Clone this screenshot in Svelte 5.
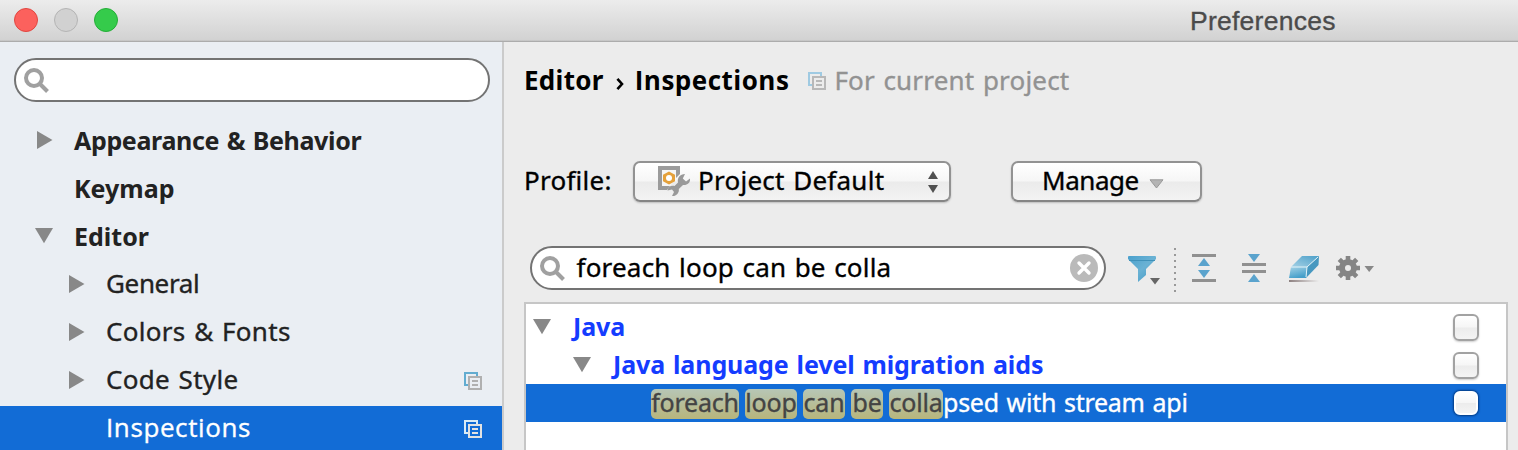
<script>
  const tree = [
    { label: 'Appearance & Behavior', level: 0, arrow: 'right', spacing: -0.35 },
    { label: 'Keymap', level: 0, arrow: '', spacing: 0 },
    { label: 'Editor', level: 0, arrow: 'down', spacing: 0 },
    { label: 'General', level: 1, arrow: 'right', spacing: -0.35 },
    { label: 'Colors & Fonts', level: 1, arrow: 'right', spacing: 0.3 },
    { label: 'Code Style', level: 1, arrow: 'right', spacing: 0.3, project: true },
    { label: 'Inspections', level: 1, arrow: '', spacing: 0.6, project: true, selected: true }
  ];
  const words = [
    { text: 'foreach', width: 88 },
    { text: 'loop', width: 52 },
    { text: 'can', width: 42 },
    { text: 'be', width: 32 },
    { text: 'colla', width: 54 }
  ];
  const query = 'foreach loop can be colla';
</script>

{#snippet disclosure(kind)}
  {#if kind === 'right'}
    <svg class="tri" width="18" height="18" viewBox="0 0 18 18"><path d="M2 0L17.5 9L2 18Z" fill="#888" /></svg>
  {:else if kind === 'down'}
    <svg class="tri" width="18" height="18" viewBox="0 0 18 18"><path d="M0 1H18L9 16.3Z" fill="#888" /></svg>
  {:else}
    <span class="tri"></span>
  {/if}
{/snippet}

{#snippet copyIcon(back, front)}
  <svg width="18" height="18" viewBox="0 0 18 18" fill="none" stroke-width="2">
    <path d="M4 13H1V1H13V4" stroke={back} />
    <path d="M5 5H17V17H5Z" stroke={front} />
    <path d="M8 9H14M8 13H14" stroke={front} />
  </svg>
{/snippet}

{#snippet magnifier()}
  <svg class="mag" width="26" height="26" viewBox="0 0 26 26" fill="none" stroke="#a0a0a0" stroke-width="4">
    <circle cx="10" cy="10" r="8" />
    <path d="M16 16L23.5 23.5" />
  </svg>
{/snippet}

<div class="window">
  <header class="titlebar">
    <span class="light red"></span>
    <span class="light gray"></span>
    <span class="light green"></span>
    <span class="title">Preferences</span>
  </header>
  <div class="body">
    <aside>
      <div class="search">{@render magnifier()}</div>
      <div class="tree">
        {#each tree as item}
          <div class="item" class:child={item.level === 1} class:selected={item.selected}>
            {@render disclosure(item.arrow)}
            <span class="label" style:letter-spacing="{item.spacing}px">{item.label}</span>
            {#if item.project}
              {@render copyIcon(item.selected ? '#d8ebf7' : '#62acd0', item.selected ? '#e2e2e2' : '#b0b0b0')}
            {/if}
          </div>
        {/each}
      </div>
    </aside>
    <main>
      <div class="crumbs">
        <b>Editor</b>
        <svg class="sep" width="8" height="12" viewBox="0 0 8 12" fill="none" stroke="#000" stroke-width="2.6"><path d="M1.4 .8L6 6L1.4 11.2" /></svg>
        <b class="current">Inspections</b>
        {@render copyIcon('#9fcae2', '#b8b8b8')}
        <span class="scope">For current project</span>
      </div>
      <div class="profile">
        <span class="plabel">Profile:</span>
        <div class="button combo">
          <svg class="picon" width="33" height="31" viewBox="0 0 33 31">
            <path d="M0 0H22V8L18 12V4H4V20H12L9 24H0Z" fill="#9b9b9b" />
            <path d="M4 4H18V12L12 20H4Z" fill="#f6f6f6" />
            <path d="M11 5.500L17 8.800V15.200L11 18.500L5 15.200V8.800Z" fill="#e5a13b" />
            <circle cx="11" cy="12" r="3" fill="#fff" />
            <path d="M27 8C22 8 19 12 20 16.500L16.500 20C13 19 10 21 9.500 24.500L14 23.500L16 26L14 30C18 30.500 21.500 27 20.800 23L25 19C29 19.500 32.500 17 32 12.500L28 15.500L24.800 12.500Z" fill="#999" />
          </svg>
          <span class="value">Project Default</span>
          <svg width="10" height="22" viewBox="0 0 10 22" fill="#505050"><path d="M0 8L5 0L10 8ZM0 14H10L5 22Z" /></svg>
        </div>
        <div class="button manage">
          <span>Manage</span>
          <svg width="15" height="10" viewBox="0 0 15 10"><path d="M1 .8H14L7.500 9Z" fill="#b4b4b4" stroke="#999" /></svg>
        </div>
      </div>
      <div class="tools">
        <div class="search query">
          {@render magnifier()}
          <span class="text">{query}</span>
          <svg width="28" height="28" viewBox="0 0 28 28"><circle cx="14" cy="14" r="14" fill="#bababa" /><path d="M9 9L19 19M19 9L9 19" stroke="#fff" stroke-width="3.400" stroke-linecap="round" /></svg>
        </div>
        <svg class="filter" width="33" height="30" viewBox="0 0 33 30">
          <defs><linearGradient id="blue" x2="1" y2="1"><stop offset="0" stop-color="#4aa0cd" /><stop offset=".5" stop-color="#6ab2d4" /><stop offset="1" stop-color="#4098c6" /></linearGradient></defs>
          <path d="M0 1Q0 0 1 0H27Q28 0 28 1V3L18 13V19L10 26V13L0 3Z" fill="url(#blue)" />
          <path d="M1 4.500H27" stroke="#3f91b9" />
          <path d="M22 22H32L27 28.500Z" fill="#666" />
        </svg>
        <svg class="dots" width="2" height="46" viewBox="0 0 2 46"><path d="M1 0V46" stroke="#999" stroke-width="2" stroke-dasharray="2 4" /></svg>
        <svg class="expand" width="24" height="28" viewBox="0 0 24 28">
          <path d="M0 1.500H24M0 26.500H24" stroke="#909090" stroke-width="3" />
          <path d="M6 12L12 4L18 12ZM6 16H18L12 24Z" fill="#5aa3cd" />
        </svg>
        <svg class="collapse" width="24" height="28" viewBox="0 0 24 28">
          <path d="M0 10.500H24M0 17.500H24" stroke="#909090" stroke-width="3" />
          <path d="M6 0H18L12 8ZM6 28L12 20L18 28Z" fill="#5aa3cd" />
        </svg>
        <svg class="eraser" width="31" height="28" viewBox="0 0 31 28">
          <defs>
            <linearGradient id="top" x1="1" x2="0" y2="1"><stop offset="0" stop-color="#4b9fc9" /><stop offset="1" stop-color="#a5d1e5" /></linearGradient>
            <linearGradient id="front" x2=".4" y2="1"><stop offset="0" stop-color="#a4d2e6" /><stop offset="1" stop-color="#459fca" /></linearGradient>
            <linearGradient id="shade"><stop offset="0" stop-color="#8d8080" /><stop offset="1" stop-color="#ececec" /></linearGradient>
          </defs>
          <path d="M2 12L13 1H30L18 12Z" fill="url(#top)" />
          <path d="M2 12H18L17 23H0Z" fill="url(#front)" />
          <path d="M18 12L30 1L29.500 10L17 23Z" fill="#4798c0" />
          <path d="M2 12H18L29 2M18 12L17 22" fill="none" stroke="#e2f3f9" />
          <rect y="25" width="30" height="2" fill="url(#shade)" />
        </svg>
        <svg class="gear" width="38" height="24" viewBox="0 0 38 24">
          <g stroke="#858585" stroke-width="4.600"><path d="M12 0V6M12 18V24M0 12H6M18 12H24M3.300 3.300L8 8M16 16L20.700 20.700M20.700 3.300L16 8M8 16L3.300 20.700" /></g>
          <circle cx="12" cy="12" r="6" fill="none" stroke="#858585" stroke-width="6" />
          <path d="M28.500 10H38L33.200 16Z" fill="#888" />
        </svg>
      </div>
      <section class="results">
        <div class="row">
          {@render disclosure('down')}
          <b>Java</b><span class="check"></span>
        </div>
        <div class="row second">
          {@render disclosure('down')}
          <b>Java language level migration aids</b><span class="check"></span>
        </div>
        <div class="row hit">
          <div class="words">
            {#each words as word}<mark style:width="{word.width}px">{word.text}</mark>{/each}
          </div>
          <span class="rest">psed with stream api</span><span class="check"></span>
        </div>
      </section>
    </main>
  </div>
</div>

<style>
  :global(body) { overflow: hidden; }
  .window { width: 1518px; height: 450px; overflow: hidden; background: #ececec; font: 26px/44px "Noto Sans", "Open Sans", sans-serif; word-spacing: 1.5px; color: #000; white-space: nowrap; -webkit-text-stroke: .35px; }
  .window * { box-sizing: border-box; }
  svg { display: block; flex: none; overflow: visible; }
  .titlebar { height: 42px; display: flex; align-items: flex-start; padding: 8px 0 0 14px; gap: 16px; border-bottom: 1px solid #acacac; background: linear-gradient(#ececec, #d2d2d2 40px, #bbb); }
  .light { width: 24px; height: 24px; border-radius: 50%; border: 1px solid; flex: none; }
  .red { background: #fc615d; border-color: #e14640; }
  .gray { background: #d1d1d1; border-color: #b4b4b4; }
  .green { background: #35cb4b; border-color: #24ae37; }
  .title { font: 26.5px/24px "Liberation Sans", sans-serif; color: #4b4b4b; letter-spacing: .25px; margin: 1px 0 0 1056px; }
  .body { display: flex; height: 408px; }
  aside { width: 504px; flex: none; background: #eaeef3; border-right: 2px solid #cbcbcb; padding-top: 16px; }
  .search { height: 44px; width: 476px; margin-left: 14px; border: 2px solid #737373; border-radius: 22px; background: #fff; display: flex; padding: 8px 0 0 8px; }
  .tree { padding-top: 16px; }
  .item { height: 48px; display: flex; padding: 0 20px 0 35px; color: #222; font-size: 25px; font-weight: 700; -webkit-text-stroke: 0; }
  .item > :global(svg:last-child) { margin-top: 14px; }
  .tri { width: 18px; height: 18px; flex: none; margin-top: 13px; }
  .label { flex: 1; margin-left: 21px; }
  .child { padding-left: 67px; font-size: 26px; line-height: 42px; font-weight: 400; -webkit-text-stroke: .35px; }
  .selected { background: #126cd6; color: #fff; font-family: "Open Sans", sans-serif; }
  main { flex: 1; min-width: 0; padding-left: 20px; }
  .crumbs { display: flex; height: 78px; padding-top: 16px; letter-spacing: .3px; }
  b { -webkit-text-stroke: 0; }
  .current { font-family: "Open Sans", sans-serif; letter-spacing: .5px; }
  .sep { margin: 20px 11px 0 12px; }
  .crumbs > :global(svg:not(.sep)) { margin: 14px 8px 0 19px; }
  .scope { color: #929292; letter-spacing: .2px; }
  .profile { display: flex; height: 126px; padding-top: 38px; }
  .plabel { width: 109px; letter-spacing: .25px; }
  .button { margin-top: 3px; height: 41px; line-height: 35px; border: 2px solid #929292; border-bottom-color: #858585; border-radius: 7px; background: linear-gradient(#fff, #f6f6f6 48%, #ebebeb 52%, #f3f3f3); box-shadow: 0 1px 2px #0003; display: flex; }
  .combo { width: 318px; padding-left: 23px; letter-spacing: .25px; }
  .picon { margin-top: 3px; }
  .value { margin-left: 7px; width: 230px; }
  .combo > svg:last-child { margin-top: 8px; }
  .manage { width: 191px; margin-left: 60px; padding-left: 29px; letter-spacing: -.45px; }
  .manage svg { margin: 16px 0 0 10px; }
  .tools { display: flex; height: 56px; padding-left: 6px; }
  .query { width: 576px; margin: 0; padding-right: 6px; flex: none; }
  .text { flex: 1; letter-spacing: .2px; line-height: 40px; margin: -9px 0 0 10.500px; }
  .query > svg:last-child { margin-top: -2px; }
  .filter { margin: 10px 0 0 22px; }
  .dots { margin: 2px 0 0 13px; }
  .expand { margin: 8px 0 0 16px; }
  .collapse { margin: 8px 0 0 26px; }
  .eraser { margin: 9px 0 0 23px; }
  .gear { margin: 10px 0 0 16px; }
  .results { width: 984px; height: 160px; border: 2px solid #c6c6c6; background: #fff; padding-top: 4px; }
  .row { height: 38px; line-height: 36px; font-size: 25px; display: flex; padding: 0 27px 0 7px; color: #143cff; }
  .row > .tri { margin-top: 10px; }
  .row b { margin-left: 22px; flex: 1; letter-spacing: -.1px; }
  .row.second { padding-left: 47px; }
  .row.hit { background: #126cd6; color: #fff; padding-left: 125px; }
  .words { display: flex; gap: 6px; margin-top: 5px; }
  mark { height: 30px; border-radius: 5px; line-height: 26px; text-align: center; letter-spacing: -.2px; color: #444; background: linear-gradient(#b7c6b6, #b7b57c); }
  .rest { flex: 1; letter-spacing: -.25px; }
  .check { width: 26px; height: 27px; margin-top: 6px; border: 2px solid #a2a2a2; border-radius: 6px; background: linear-gradient(#fff, #f6f6f6 48%, #ececec 52%, #f4f4f4); box-shadow: 0 1px 2px #0003; }
  .hit .check { border-color: #fff; box-shadow: 0 0 2px 1px #053b83; width: 24px; height: 24px; margin: 7px 1px; }
</style>
